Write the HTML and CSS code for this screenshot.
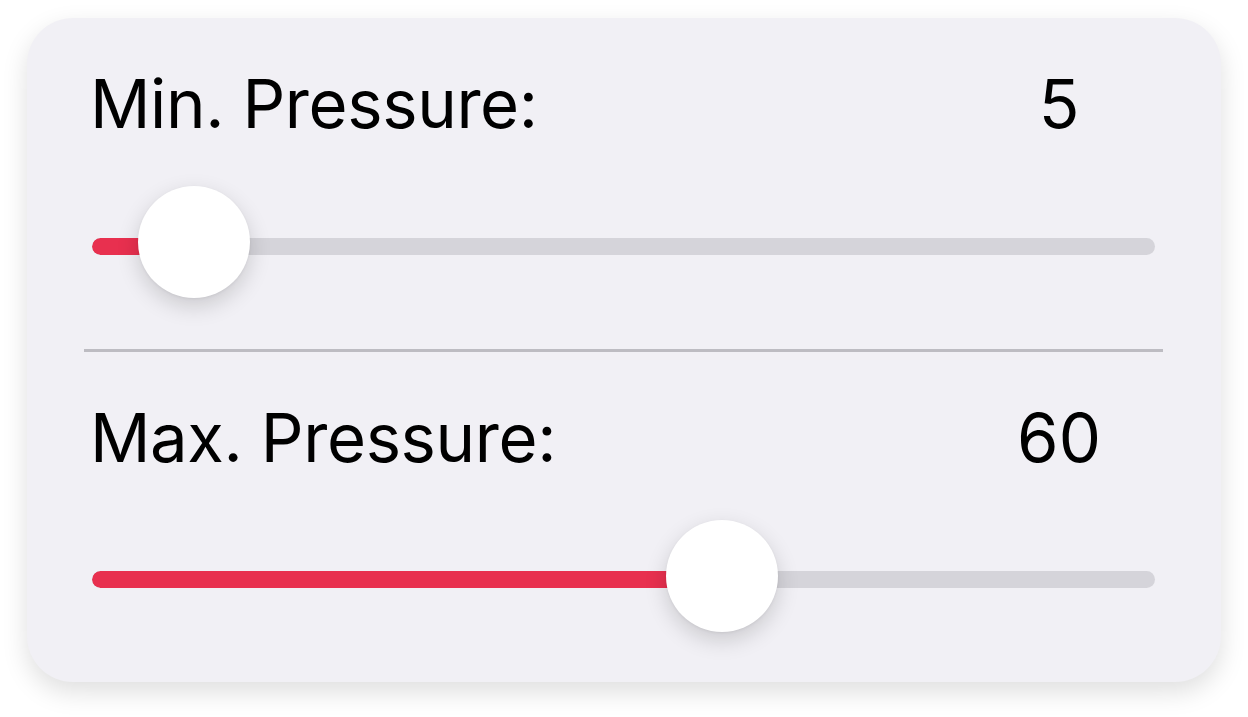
FILE: index.html
```html
<!DOCTYPE html>
<html>
<head>
<meta charset="utf-8">
<link rel="stylesheet" href="styles.css">
</head>
<body>
<div class="card">
  <section class="setting">
    <div class="label-row">
      <span class="label">Min. Pressure:</span>
      <span class="value">5</span>
    </div>
    <div class="slider">
      <div class="track"><div class="fill" style="width: 102px"></div></div>
      <div class="thumb" style="left: 46px"></div>
    </div>
  </section>
  <div class="divider"></div>
  <section class="setting">
    <div class="label-row">
      <span class="label">Max. Pressure:</span>
      <span class="value">60</span>
    </div>
    <div class="slider">
      <div class="track"><div class="fill" style="width: 630px"></div></div>
      <div class="thumb" style="left: 574px"></div>
    </div>
  </section>
</div>
</body>
</html>
```

FILE: styles.css
```css
html, body {
  margin: 0;
  padding: 0;
  background: #ffffff;
}
body {
  box-sizing: border-box;
  min-height: 717px;
  padding: 18px 27px 35px 27px;
  font-family: "Inter", "Noto Sans", sans-serif;
}
.card {
  width: 1194px;
  height: 664px;
  box-sizing: border-box;
  background: #f1f0f5;
  border-radius: 46px;
  box-shadow: 0 10px 26px rgba(0, 0, 0, 0.13);
  display: flex;
  flex-direction: column;
  padding: 0 58px 0 57px;
}
.setting {
  flex: 1;
  display: flex;
  flex-direction: column;
  padding: 0 8px;
}
.label-row {
  display: flex;
  justify-content: space-between;
  align-items: center;
  height: 84px;
  margin-top: 44px;
  font-size: 67px;
  line-height: 84px;
  color: #000;
}
.label {
  letter-spacing: -0.4px;
  margin-left: -2px;
}
.value {
  width: 120px;
  text-align: center;
  margin-right: 36px;
}
.slider {
  position: relative;
  height: 112px;
  margin-top: 44px;
  display: flex;
  align-items: center;
}
.track {
  width: 100%;
  height: 17px;
  border-radius: 9px;
  background: #d5d4da;
  overflow: hidden;
}
.fill {
  height: 100%;
  background: #e8304f;
  border-radius: 9px 0 0 9px;
}
.thumb {
  position: absolute;
  top: -4px;
  width: 112px;
  height: 112px;
  border-radius: 50%;
  background: #ffffff;
  box-shadow: 0 8px 22px rgba(0, 0, 0, 0.16), 0 1px 3px rgba(0, 0, 0, 0.06);
}
.divider {
  height: 3px;
  background: #bdbcc2;
}
```
